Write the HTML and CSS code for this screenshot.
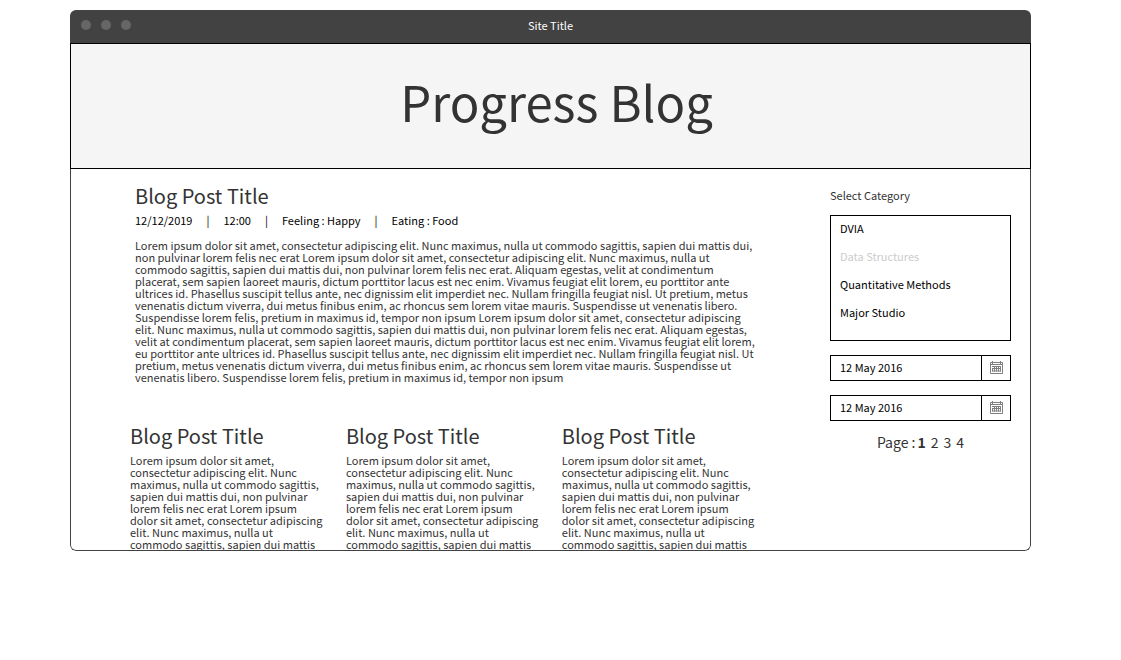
FILE: index.html
```html
<!DOCTYPE html>
<html lang="en">
<head>
<meta charset="utf-8">
<title>Progress Blog</title>
<link rel="stylesheet" href="styles.css">
</head>
<body>
<svg class="defs" width="0" height="0" aria-hidden="true">
  <symbol id="calendar" viewBox="0 0 13 13">
    <path d="M.5 1.500h12v11H.5zM.5 3.500h12M2.500 0v3M10.500 0v3M2 5.500h9M2 7.500h9M2 10h9M4.500 5v5.500M6.500 5v5.500M8.500 5v5.500M10.500 5v5.500M2.500 7v3.500" fill="none" stroke="currentColor"/>
  </symbol>
</svg>
<div class="window">
  <div class="titlebar">
    <div class="dots"><span class="dot"></span><span class="dot"></span><span class="dot"></span></div>
    <span class="site-title">Site Title</span>
  </div>
  <header class="banner"><h1 class="blog-name">Progress Blog</h1></header>
  <div class="page">
    <main class="posts">
      <article class="featured">
        <h2 class="post-title">Blog Post Title</h2>
        <div class="meta"><span>12/12/2019</span><span>|</span><span>12:00</span><span>|</span><span>Feeling : Happy</span><span>|</span><span>Eating : Food</span></div>
        <p class="text">Lorem ipsum dolor sit amet, consectetur adipiscing elit. Nunc maximus, nulla ut commodo sagittis, sapien dui mattis dui,<br>
        non pulvinar lorem felis nec erat Lorem ipsum dolor sit amet, consectetur adipiscing elit. Nunc maximus, nulla ut<br>
        commodo sagittis, sapien dui mattis dui, non pulvinar lorem felis nec erat. Aliquam egestas, velit at condimentum<br>
        placerat, sem sapien laoreet mauris, dictum porttitor lacus est nec enim. Vivamus feugiat elit lorem, eu porttitor ante<br>
        ultrices id. Phasellus suscipit tellus ante, nec dignissim elit imperdiet nec. Nullam fringilla feugiat nisl. Ut pretium, metus<br>
        venenatis dictum viverra, dui metus finibus enim, ac rhoncus sem lorem vitae mauris. Suspendisse ut venenatis libero.<br>
        Suspendisse lorem felis, pretium in maximus id, tempor non ipsum Lorem ipsum dolor sit amet, consectetur adipiscing<br>
        elit. Nunc maximus, nulla ut commodo sagittis, sapien dui mattis dui, non pulvinar lorem felis nec erat. Aliquam egestas,<br>
        velit at condimentum placerat, sem sapien laoreet mauris, dictum porttitor lacus est nec enim. Vivamus feugiat elit lorem,<br>
        eu porttitor ante ultrices id. Phasellus suscipit tellus ante, nec dignissim elit imperdiet nec. Nullam fringilla feugiat nisl. Ut<br>
        pretium, metus venenatis dictum viverra, dui metus finibus enim, ac rhoncus sem lorem vitae mauris. Suspendisse ut<br>
        venenatis libero. Suspendisse lorem felis, pretium in maximus id, tempor non ipsum</p>
      </article>
      <div class="row">
        <article class="card">
          <h2 class="post-title">Blog Post Title</h2>
          <p class="text">Lorem ipsum dolor sit amet,<br>consectetur adipiscing elit. Nunc<br>maximus, nulla ut commodo sagittis,<br>sapien dui mattis dui, non pulvinar<br>lorem felis nec erat Lorem ipsum<br>dolor sit amet, consectetur adipiscing<br>elit. Nunc maximus, nulla ut<br>commodo sagittis, sapien dui mattis</p>
        </article>
        <article class="card">
          <h2 class="post-title">Blog Post Title</h2>
          <p class="text">Lorem ipsum dolor sit amet,<br>consectetur adipiscing elit. Nunc<br>maximus, nulla ut commodo sagittis,<br>sapien dui mattis dui, non pulvinar<br>lorem felis nec erat Lorem ipsum<br>dolor sit amet, consectetur adipiscing<br>elit. Nunc maximus, nulla ut<br>commodo sagittis, sapien dui mattis</p>
        </article>
        <article class="card">
          <h2 class="post-title">Blog Post Title</h2>
          <p class="text">Lorem ipsum dolor sit amet,<br>consectetur adipiscing elit. Nunc<br>maximus, nulla ut commodo sagittis,<br>sapien dui mattis dui, non pulvinar<br>lorem felis nec erat Lorem ipsum<br>dolor sit amet, consectetur adipiscing<br>elit. Nunc maximus, nulla ut<br>commodo sagittis, sapien dui mattis</p>
        </article>
      </div>
    </main>
    <aside class="sidebar">
      <label class="label" for="category">Select Category</label>
      <select class="category" id="category" size="4">
        <option>DVIA</option>
        <option disabled>Data Structures</option>
        <option>Quantitative Methods</option>
        <option>Major Studio</option>
      </select>
      <div class="date"><input class="date-input" type="text" aria-label="From date" value="12 May 2016"><button class="date-button" type="button" aria-label="Choose from date"><svg class="icon"><use href="#calendar"/></svg></button></div>
      <div class="date"><input class="date-input" type="text" aria-label="To date" value="12 May 2016"><button class="date-button" type="button" aria-label="Choose to date"><svg class="icon"><use href="#calendar"/></svg></button></div>
      <nav class="pages" aria-label="Pages"><span>Page :</span><div class="numbers"><a class="current" href="#1" aria-current="page">1</a><a href="#2">2</a><a href="#3">3</a><a href="#4">4</a></div></nav>
    </aside>
  </div>
</div>
</body>
</html>
```
FILE: styles.css
```css
* { box-sizing: border-box; }
body {
  margin: 0;
  padding: 10px 90px 0 70px;
  background: #fff;
  color: #333;
  font: 11px/12px "Noto Sans CJK SC", sans-serif;
}
h1, h2, p { margin: 0; font-weight: 400; }
.defs { display: block; }
.window {
  display: flex;
  flex-direction: column;
  height: calc(100vh - 119px);
  border-radius: 6px;
  overflow: hidden;
}
.titlebar {
  display: grid;
  grid-template-columns: 1fr auto 1fr;
  align-items: center;
  flex: none;
  padding: 9px 11px 12px;
  background: #424242;
  color: #fff;
}
.dots { display: flex; gap: 10px; }
.dot { width: 10px; height: 10px; border-radius: 50%; background: #666; }
.banner {
  flex: none;
  padding: 21px 0 31px 12px;
  border: 1px solid #000;
  background: #f5f5f5;
  text-align: center;
}
.blog-name { font-size: 49px; line-height: 72px; }
.page {
  display: flex;
  flex: 1;
  min-height: 0;
  justify-content: space-between;
  padding: 13px 19px 0 59px;
  border: 1px solid #424242;
  border-top: 0;
  border-radius: 0 0 6px 6px;
  overflow: hidden;
}
.posts { flex: 0 1 620px; }
.featured { padding-left: 5px; }
.post-title { font-size: 20px; line-height: 28px; }
.text { white-space: nowrap; }
.meta {
  display: flex;
  gap: 14px;
  margin: 4px 0 13px;
  color: #000;
}
.row {
  display: grid;
  grid-template-columns: repeat(3, minmax(0, 1fr));
  gap: 23px;
  margin-top: 39px;
}
.card .text { margin-top: 4px; }
.sidebar {
  display: flex;
  flex-direction: column;
  flex: 0 0 181px;
  padding-top: 7px;
}
.category {
  margin: 14px 0;
  height: 126px;
  padding: 0;
  border: 1px solid #000;
  border-radius: 0;
  background: #fff;
  color: #000;
  font: inherit;
  overflow: hidden;
}
.category option { padding: 4px 9px 8px; color: #000; }
.category option:disabled { color: #ccc; }
.date {
  display: flex;
  height: 26px;
  margin-bottom: 14px;
  border: 1px solid #000;
}
.date-input {
  flex: 1;
  min-width: 0;
  padding: 0 9px 2px;
  border: 0;
  background: none;
  color: #000;
  font: inherit;
  line-height: 22px;
}
.date-button {
  display: flex;
  align-items: center;
  justify-content: center;
  width: 29px;
  padding: 0 0 2px;
  border: 0;
  border-left: 1px solid #000;
  background: none;
  color: #808080;
}
.icon { width: 13px; height: 13px; }
.pages {
  display: flex;
  justify-content: center;
  gap: 2px;
  font-size: 14px;
  line-height: 14px;
}
.numbers { display: flex; gap: 5px; }
.numbers a { color: inherit; text-decoration: none; }
.numbers .current { font-weight: 700; }
```
